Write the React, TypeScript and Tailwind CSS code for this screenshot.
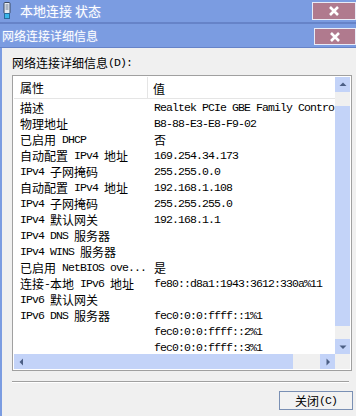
import React from "react";

const rows: [string, string][] = [
  ["描述", "Realtek PCIe GBE Family Contro"],
  ["物理地址", "B8-88-E3-E8-F9-02"],
  ["已启用 DHCP", "否"],
  ["自动配置 IPv4 地址", "169.254.34.173"],
  ["IPv4 子网掩码", "255.255.0.0"],
  ["自动配置 IPv4 地址", "192.168.1.108"],
  ["IPv4 子网掩码", "255.255.255.0"],
  ["IPv4 默认网关", "192.168.1.1"],
  ["IPv4 DNS 服务器", ""],
  ["IPv4 WINS 服务器", ""],
  ["已启用 NetBIOS ove...", "是"],
  ["连接-本地 IPv6 地址", "fe80::d8a1:1943:3612:330a%11"],
  ["IPv6 默认网关", ""],
  ["IPv6 DNS 服务器", "fec0:0:0:ffff::1%1"],
  ["", "fec0:0:0:ffff::2%1"],
  ["", "fec0:0:0:ffff::3%1"],
];

// SimSun-ish look: CJK at 12px, latin half-width (6px pitch)
function Txt({ t }: { t: string }) {
  const parts = t.split(/([\u2E80-\u9FFF\uFF00-\uFFEF]+)/);
  return (
    <span className="inline-flex h-[15px] items-center whitespace-pre">
      {parts.map((p, i) =>
        p === "" ? null : /[\u2E80-\u9FFF\uFF00-\uFFEF]/.test(p) ? (
          <span
            key={i}
            className="inline-block h-[15px] leading-[15px] font-['Noto_Sans_CJK_SC',sans-serif] text-[12px]"
          >
            {p}
          </span>
        ) : (
          <span
            key={i}
            className="inline-block h-[15px] leading-[15px] font-['Liberation_Mono',monospace] text-[11.5px] tracking-[-0.9px]"
          >
            {p}
          </span>
        )
      )}
    </span>
  );
}

function CloseBtn({ w, h }: { w: string; h: string }) {
  return (
    <div
      className={`${w} ${h} bg-[#b07a8e] border border-[#e8ecf8] flex items-center justify-center`}
    >
      <svg width="10" height="10" viewBox="0 0 10 10">
        <path d="M1 1L9 9M9 1L1 9" stroke="#fff" strokeWidth="2.6" />
      </svg>
    </div>
  );
}

function Arrow({ dir }: { dir: "up" | "down" | "left" | "right" }) {
  const d = {
    up: "M0.5 5L4 1.5L7.5 5Z",
    down: "M0.5 2.5L4 6L7.5 2.5Z",
    left: "M5 0.5L1.5 4L5 7.5Z",
    right: "M2.5 0.5L6 4L2.5 7.5Z",
  }[dir];
  return (
    <div className="w-[15px] h-[15px] bg-[#c3d3f8] flex items-center justify-center shrink-0">
      <svg width="8" height="8" viewBox="0 0 8 8">
        <path d={d} fill="#4c5f84" />
      </svg>
    </div>
  );
}

export default function App() {
  return (
    <div className="w-[356px] h-[416px] bg-[#f0f0f0] flex flex-col overflow-hidden text-black">
      {/* outer window title */}
      <div className="h-[22px] bg-[#7b9ce1] flex items-start">
        <svg width="10" height="18" viewBox="0 0 10 18" className="ml-[2px] mt-[2px]">
          <rect x="2" y="0.5" width="6" height="11" rx="1" fill="#e8ecf2" stroke="#3d4a60" />
          <rect x="3.5" y="2" width="3" height="6" fill="#a9b3c2" />
          <rect x="2.5" y="11.5" width="5" height="5" fill="#3bb6e8" stroke="#2a6a9a" />
        </svg>
        <span className="ml-[8px] mt-[2px] text-white text-[13px] leading-[18px] font-['Noto_Sans_CJK_SC',sans-serif] [text-shadow:0_0_2px_#9fb6ee]">
          本地连接 状态
        </span>
        <div className="ml-auto mt-[2px]">
          <CloseBtn w="w-[44px]" h="h-[18px]" />
        </div>
      </div>
      <div className="h-[2px] bg-[#6683c8]" />
      {/* inner dialog title */}
      <div className="h-[23px] bg-[#7b9ce1] flex items-center">
        <span className="ml-[2px] text-white text-[12px] leading-[16px] font-['Noto_Sans_CJK_SC',sans-serif] [text-shadow:0_0_2px_#9fb6ee]">
          网络连接详细信息
        </span>
        <div className="ml-auto mt-[2px]">
          <CloseBtn w="w-[42px]" h="h-[17px]" />
        </div>
      </div>
      <div className="h-px bg-[#6683c8]" />

      <div className="flex-1 flex">
        <div className="w-[2px] bg-[#7b9ce1]" />
        <div className="flex-1 pl-[10px] pt-[6px] flex flex-col">
          <div className="h-[16px] flex items-center">
            <Txt t="网络连接详细信息(D):" />
          </div>

          {/* list view */}
          <div className="mt-[5px] w-[340px] h-[296px] border border-[#a0a0a0] bg-white p-px flex flex-col">
            <div className="flex flex-1 min-h-0">
              <div className="flex-1 min-w-0 overflow-hidden flex flex-col">
                <div className="h-[22px] shrink-0 flex border-b border-[#e5e5e5] items-center">
                  <div className="w-[134px] pl-[6px] border-r border-[#e5e5e5] h-full flex items-center">
                    <Txt t="属性" />
                  </div>
                  <div className="pl-[5px]">
                    <Txt t="值" />
                  </div>
                </div>
                {rows.map(([k, v], i) => (
                  <div key={i} className="h-[16px] shrink-0 flex items-center">
                    <div className="w-[135px] pl-[6px] shrink-0 flex items-center">
                      <Txt t={k} />
                    </div>
                    <div className="pl-[5px] flex items-center">
                      <Txt t={v} />
                    </div>
                  </div>
                ))}
              </div>
              {/* vertical scrollbar */}
              <div className="w-[15px] flex flex-col bg-[#f0f0f0]">
                <Arrow dir="up" />
                <div className="h-[14px]" />
                <div className="h-[220px] bg-[#c3d3f8]" />
                <div className="flex-1" />
                <Arrow dir="down" />
              </div>
            </div>
            {/* horizontal scrollbar */}
            <div className="h-[15px] flex bg-[#f0f0f0]">
              <Arrow dir="left" />
              <div className="w-[264px] bg-[#c3d3f8]" />
              <div className="flex-1" />
              <Arrow dir="right" />
              <div className="w-[15px]" />
            </div>
          </div>

          <div className="mt-[10px] w-[337px] h-[2px] border-t border-[#a0a0a0] border-b border-b-white" />

          <div className="mt-[8px] flex justify-end pr-[3px]">
            <button className="w-[74px] h-[19px] border border-[#7a90b4] bg-[#f2f2f2] flex items-center justify-center">
              <Txt t="关闭(C)" />
            </button>
          </div>
        </div>
      </div>
    </div>
  );
}
